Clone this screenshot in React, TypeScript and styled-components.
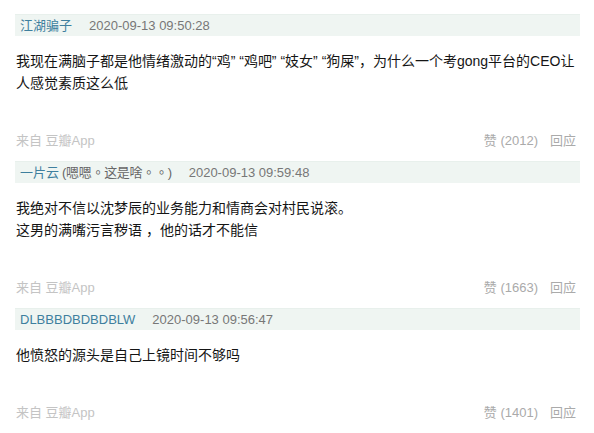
import styled, { createGlobalStyle } from 'styled-components';

const GlobalStyle = createGlobalStyle`
  html, body {
    margin: 0;
    padding: 0;
    background: #fff;
  }
  body {
    font-family: "Liberation Sans", "Noto Sans CJK SC", sans-serif;
  }
`;

const List = styled.div`
  width: 565px;
  padding: 14px 0 0 15px;
`;

const Item = styled.div`
  margin-bottom: 10px;
`;

const Author = styled.div`
  display: flex;
  align-items: center;
  height: 22px;
  padding-left: 5px;
  background: #eff5f2;
  border-top: 1px solid #e8f0ec;
  box-sizing: border-box;
  font-size: 13px;
  line-height: 21px;
`;

const Name = styled.span`
  color: #3e7f9e;
`;

// signature text: centered full stops like the original rendering
const Extra = styled.span`
  color: #666;
  margin-left: 3px;
  letter-spacing: -0.3px;
  font-family: "Liberation Sans", "Noto Sans CJK TC", sans-serif;
`;

const Time = styled.span`
  color: #777;
  margin-left: 17px;
`;

const Body = styled.p`
  margin: 14px 0 0 1px;
  font-size: 14px;
  line-height: 22px;
  color: #151515;
`;

const Footer = styled.div`
  display: flex;
  justify-content: space-between;
  align-items: center;
  height: 20px;
  margin-top: 37px;
  padding: 0 4px 0 1px;
  font-size: 13px;
  line-height: 20px;
`;

const Source = styled.span`
  color: #c4c4c4;
`;

const Ops = styled.div`
  display: flex;
  gap: 12px;
  color: #aaa;
`;

type Comment = {
  name: string;
  extra?: string;
  time: string;
  lines: string[];
  votes: number;
};

const comments: Comment[] = [
  {
    name: '江湖骗子',
    time: '2020-09-13 09:50:28',
    lines: [
      '我现在满脑子都是他情绪激动的“鸡” “鸡吧” “妓女” “狗屎”，为什么一个考gong平台的CEO让',
      '人感觉素质这么低',
    ],
    votes: 2012,
  },
  {
    name: '一片云',
    extra: '(嗯嗯。这是啥。。)',
    time: '2020-09-13 09:59:48',
    lines: ['我绝对不信以沈梦辰的业务能力和情商会对村民说滚。', '这男的满嘴污言秽语 ，他的话才不能信'],
    votes: 1663,
  },
  {
    name: 'DLBBBDBDBDBLW',
    time: '2020-09-13 09:56:47',
    lines: ['他愤怒的源头是自己上镜时间不够吗'],
    votes: 1401,
  },
];

export default function App() {
  return (
    <>
      <GlobalStyle />
      <List>
        {comments.map((c) => (
          <Item key={c.name}>
            <Author>
              <Name>{c.name}</Name>
              {c.extra && <Extra>{c.extra}</Extra>}
              <Time>{c.time}</Time>
            </Author>
            <Body>
              {c.lines.map((l, i) => (
                <span key={i}>
                  {i > 0 && <br />}
                  {l}
                </span>
              ))}
            </Body>
            <Footer>
              <Source>来自 豆瓣App</Source>
              <Ops>
                <span>赞 ({c.votes})</span>
                <span>回应</span>
              </Ops>
            </Footer>
          </Item>
        ))}
      </List>
    </>
  );
}
